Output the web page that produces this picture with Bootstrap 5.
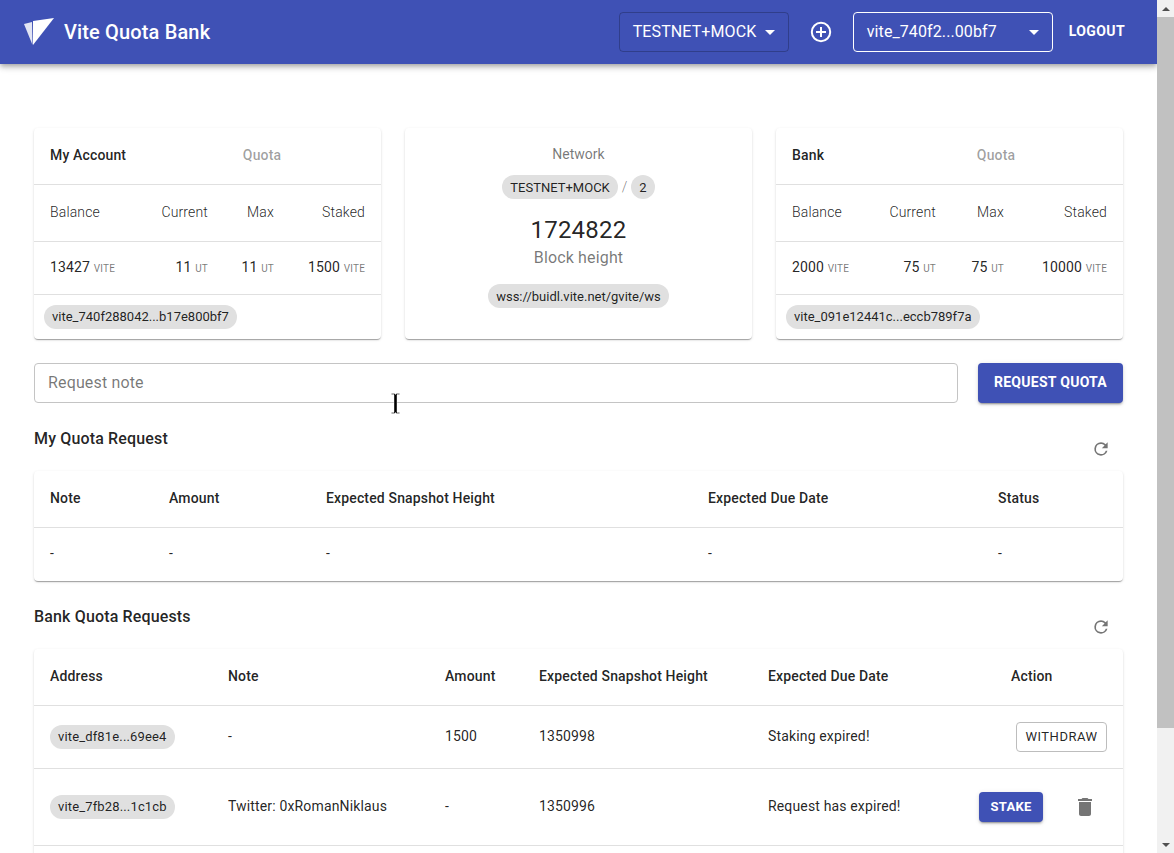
<!doctype html>
<html lang="en">
<head>
<meta charset="utf-8">
<title>Vite Quota Bank</title>
<link href="https://cdn.jsdelivr.net/npm/bootstrap@5.3.0/dist/css/bootstrap.min.css" rel="stylesheet">
<style>
html,body{height:853px;overflow:hidden;background:#fff}
body{font-family:Roboto,"Liberation Sans",sans-serif;font-size:14px;color:rgba(0,0,0,.87)}
.app-shell{height:853px;position:relative}
.app-main{width:1157px;height:853px;overflow:hidden;flex:none}
.app-bar{height:64px;background:#3f51b5;color:#fff;padding:0 32px 0 24px;box-shadow:0 2px 4px -1px rgba(0,0,0,.2),0 4px 5px 0 rgba(0,0,0,.14),0 1px 10px 0 rgba(0,0,0,.12);position:relative;z-index:2}
.app-title{font-size:20px;font-weight:500;line-height:1;margin-left:8px;letter-spacing:.0075em}
.logo-svg{width:32px;height:32px;display:block}
.select-net,.select-acct{height:40px;border-radius:4px;color:#fff;font-size:16px;display:flex;align-items:center;background:transparent;padding:0 13px;letter-spacing:.1px}
.select-net{width:170px;border:1px solid rgba(0,0,0,.23);margin-right:20px}
.select-acct{width:200px;border:1px solid #fff;margin-left:20px;margin-right:16px}
.caret-tri{width:0;height:0;border-left:5px solid transparent;border-right:5px solid transparent;border-top:5px solid #fff;margin-left:auto}
.plus-icon{width:24px;height:24px;display:block}
.logout-txt{font-size:14px;font-weight:700;letter-spacing:.02857em;color:#fff;line-height:1;margin-top:-2px}
.page-body{padding:64px 34px 0}
.cards-row{display:grid;grid-template-columns:repeat(3,347px);gap:24px;height:211px}
.paper{background:#fff;border-radius:4px;border:0;box-shadow:0 2px 1px -1px rgba(0,0,0,.2),0 1px 1px 0 rgba(0,0,0,.14),0 1px 3px 0 rgba(0,0,0,.12)}
.mui-tbl{table-layout:fixed;width:100%;margin:0;font-size:14px;letter-spacing:.01071em;--bs-table-bg:transparent;--bs-table-color:rgba(0,0,0,.87);--bs-table-border-color:#e0e0e0}
.mui-tbl th,.mui-tbl td{padding:0 16px;vertical-align:middle;border-bottom:1px solid #e0e0e0;line-height:1.43;box-shadow:none;white-space:nowrap}
.mui-tbl th{font-weight:500;padding-bottom:2px}
.mini th{height:56px}
.mini .row-labels td{height:57px;font-weight:300}
.mini .row-vals td{height:53px;font-weight:400}
.mini .quota-head{color:rgba(0,0,0,.38);text-align:center}
.mini .foot-cell{padding:0 10px;height:45px;border-bottom:0;letter-spacing:0}
.unit-txt{font-size:10px;text-transform:uppercase;color:rgba(0,0,0,.54);letter-spacing:.02em}
.chip-pill{display:inline-flex;align-items:center;height:24px;padding:0 8px;border-radius:12px;background:#e0e0e0;font-size:13px;line-height:1;color:rgba(0,0,0,.87);white-space:nowrap}
.net-card{text-align:center;padding-top:19px}
.net-label{font-size:14px;line-height:14px;color:rgba(0,0,0,.54)}
.net-chips{margin-top:14px;height:24px;color:rgba(0,0,0,.54);gap:4px;font-weight:300}
.net-chips .chip-pill{font-weight:400}
.net-round{padding:0 8px;min-width:23px;justify-content:center}
.net-height{font-size:24px;line-height:28px;margin-top:17px;color:rgba(0,0,0,.87);letter-spacing:.01em}
.net-sub{font-size:16px;line-height:20px;color:rgba(0,0,0,.54);margin-top:4px;letter-spacing:.00938em}
.net-ws{margin-top:16px}
.req-row{margin-top:24px;gap:20px;height:40px}
.note-input{width:924px;height:40px;border:1px solid #c4c4c4;border-radius:4px;padding:0 13px 2px;font-size:16px;font-family:inherit;letter-spacing:.00938em;color:rgba(0,0,0,.87);background:#fff}
.note-input::placeholder{color:rgba(0,0,0,.54);opacity:1}
.mat-btn{background:#3f51b5;color:#fff;font-weight:700;font-size:14px;letter-spacing:.02em;border:0;border-radius:4px;text-transform:uppercase;box-shadow:0 3px 1px -2px rgba(0,0,0,.2),0 2px 2px 0 rgba(0,0,0,.14),0 1px 5px 0 rgba(0,0,0,.12);line-height:1}
.btn-request{width:145px;height:40px;padding:0 0 2px}
.section-head{display:flex;justify-content:space-between;font-size:16px;font-weight:500;line-height:24px;letter-spacing:.00938em}
.section-a{margin-top:24px;height:44px}
.section-b{margin-top:24px;height:44px}
.refresh-svg{width:20px;height:20px;display:block;margin:12px 12px 0 0}
.wide thead th{height:56px}
.wide tbody td{height:54px}
.first-tbl .last-r td{border-bottom:0;padding-bottom:2px}
.tbl-b tr.r1 td{height:63px}
.tbl-b tr.r2 td{height:77px}
.tbl-b tr.r3 td{height:60px}
.action-head{padding-left:48px !important}
.btn-withdraw{width:91px;height:30px;border:1px solid #bdbdbd;border-radius:4px;background:#fff;color:rgba(0,0,0,.87);font-size:13px;font-weight:400;letter-spacing:.04em;text-transform:uppercase;line-height:1;padding:0}
.btn-stake{width:64px;height:30px;font-size:13px}
.trash-svg{width:24px;height:24px;display:block;margin-left:30px;margin-right:10px}
.scroll-col{width:17px;height:853px;background:#f1f1f1;flex:none}
.scroll-arrow{height:17px}
.arrow-up{width:0;height:0;border-left:4px solid transparent;border-right:4px solid transparent;border-bottom:4px solid #505050}
.arrow-down{width:0;height:0;border-left:4px solid transparent;border-right:4px solid transparent;border-top:4px solid #505050}
.scroll-thumb{height:711px;background:#c1c1c1}
.scroll-space{flex:1}
.ibeam{position:absolute;left:391px;top:393px;width:9px;height:21px;z-index:5}
</style>
</head>
<body>
<div class="app-shell d-flex">
  <div class="app-main">
    <header class="app-bar d-flex align-items-center">
      <svg class="logo-svg" viewBox="0 0 32 32" aria-hidden="true"><path d="M0 8 L8 6 L8.5 29 Z" fill="#fff" opacity=".85"/><path d="M9 5 L30 2 L9 29 Z" fill="#fff"/></svg>
      <span class="app-title">Vite Quota Bank</span>
      <div class="select-net ms-auto"><span>TESTNET+MOCK</span><span class="caret-tri"></span></div>
      <svg class="plus-icon" viewBox="0 0 24 24" aria-hidden="true"><circle cx="12" cy="12" r="9.2" fill="none" stroke="#fff" stroke-width="2"/><path d="M12 7v10M7 12h10" stroke="#fff" stroke-width="2" fill="none"/></svg>
      <div class="select-acct"><span>vite_740f2...00bf7</span><span class="caret-tri"></span></div>
      <span class="logout-txt">LOGOUT</span>
    </header>
    <main class="page-body">
      <div class="cards-row">
        <section class="paper">
          <table class="table mui-tbl mini">
            <colgroup><col style="width:109px"><col style="width:81px"><col style="width:66px"><col style="width:91px"></colgroup>
            <tr><th>My Account</th><th colspan="3" class="quota-head">Quota</th></tr>
            <tr class="row-labels"><td>Balance</td><td class="text-end">Current</td><td class="text-end">Max</td><td class="text-end">Staked</td></tr>
            <tr class="row-vals"><td>13427 <span class="unit-txt">vite</span></td><td class="text-end">11 <span class="unit-txt">ut</span></td><td class="text-end">11 <span class="unit-txt">ut</span></td><td class="text-end">1500 <span class="unit-txt">vite</span></td></tr>
            <tr><td colspan="4" class="foot-cell"><span class="chip-pill">vite_740f288042...b17e800bf7</span></td></tr>
          </table>
        </section>
        <section class="paper net-card">
          <div class="net-label">Network</div>
          <div class="net-chips d-flex justify-content-center align-items-center"><span class="chip-pill">TESTNET+MOCK</span><span>/</span><span class="chip-pill net-round">2</span></div>
          <div class="net-height">1724822</div>
          <div class="net-sub">Block height</div>
          <div class="net-ws"><span class="chip-pill">wss://buidl.vite.net/gvite/ws</span></div>
        </section>
        <section class="paper">
          <table class="table mui-tbl mini">
            <colgroup><col style="width:93px"><col style="width:83px"><col style="width:68px"><col style="width:103px"></colgroup>
            <tr><th>Bank</th><th colspan="3" class="quota-head">Quota</th></tr>
            <tr class="row-labels"><td>Balance</td><td class="text-end">Current</td><td class="text-end">Max</td><td class="text-end">Staked</td></tr>
            <tr class="row-vals"><td>2000 <span class="unit-txt">vite</span></td><td class="text-end">75 <span class="unit-txt">ut</span></td><td class="text-end">75 <span class="unit-txt">ut</span></td><td class="text-end">10000 <span class="unit-txt">vite</span></td></tr>
            <tr><td colspan="4" class="foot-cell"><span class="chip-pill">vite_091e12441c...eccb789f7a</span></td></tr>
          </table>
        </section>
      </div>

      <div class="req-row d-flex">
        <input class="note-input" type="text" placeholder="Request note">
        <button class="mat-btn btn-request" type="button">Request quota</button>
      </div>

      <div class="section-head section-a">
        <span>My Quota Request</span>
        <svg class="refresh-svg" viewBox="0 0 24 24" aria-hidden="true"><path fill="#757575" d="M17.65 6.35A7.96 7.96 0 0 0 12 4a8 8 0 1 0 7.73 10h-2.08A6 6 0 1 1 12 6c1.66 0 3.14.69 4.22 1.78L13 11h7V4l-2.35 2.35z"/></svg>
      </div>
      <div class="paper">
        <table class="table mui-tbl wide first-tbl">
          <colgroup><col style="width:119px"><col style="width:157px"><col style="width:382px"><col style="width:290px"><col style="width:141px"></colgroup>
          <thead><tr><th>Note</th><th>Amount</th><th>Expected Snapshot Height</th><th>Expected Due Date</th><th>Status</th></tr></thead>
          <tbody><tr class="last-r"><td>-</td><td>-</td><td>-</td><td>-</td><td>-</td></tr></tbody>
        </table>
      </div>

      <div class="section-head section-b">
        <span>Bank Quota Requests</span>
        <svg class="refresh-svg" viewBox="0 0 24 24" aria-hidden="true"><path fill="#757575" d="M17.65 6.35A7.96 7.96 0 0 0 12 4a8 8 0 1 0 7.73 10h-2.08A6 6 0 1 1 12 6c1.66 0 3.14.69 4.22 1.78L13 11h7V4l-2.35 2.35z"/></svg>
      </div>
      <div class="paper">
        <table class="table mui-tbl wide tbl-b">
          <colgroup><col style="width:178px"><col style="width:217px"><col style="width:94px"><col style="width:229px"><col style="width:211px"><col style="width:160px"></colgroup>
          <thead><tr><th>Address</th><th>Note</th><th>Amount</th><th>Expected Snapshot Height</th><th>Expected Due Date</th><th class="action-head">Action</th></tr></thead>
          <tbody>
            <tr class="r1"><td><span class="chip-pill">vite_df81e...69ee4</span></td><td>-</td><td>1500</td><td>1350998</td><td>Staking expired!</td><td class="text-end"><button class="btn-withdraw" type="button">Withdraw</button></td></tr>
            <tr class="r2"><td><span class="chip-pill">vite_7fb28...1c1cb</span></td><td>Twitter: 0xRomanNiklaus</td><td>-</td><td>1350996</td><td>Request has expired!</td><td><div class="d-flex align-items-center"><button class="mat-btn btn-stake" type="button">Stake</button><svg class="trash-svg" viewBox="0 0 24 24" aria-hidden="true"><path fill="#757575" d="M6 19c0 1.1.9 2 2 2h8c1.1 0 2-.9 2-2V7H6v12zM19 4h-3.5l-1-1h-5l-1 1H5v2h14V4z"/></svg></div></td></tr>
            <tr class="r3"><td></td><td></td><td></td><td></td><td></td><td></td></tr>
          </tbody>
        </table>
      </div>
    </main>
  </div>
  <div class="scroll-col d-flex flex-column">
    <div class="scroll-arrow d-flex align-items-center justify-content-center"><span class="arrow-up"></span></div>
    <div class="scroll-thumb"></div>
    <div class="scroll-space"></div>
    <div class="scroll-arrow d-flex align-items-center justify-content-center"><span class="arrow-down"></span></div>
  </div>
  <svg class="ibeam" viewBox="0 0 9 21" aria-hidden="true"><path d="M0.5 .5h3l1 1 1-1h3v1h-2.5v18h2.5v1h-3l-1-1-1 1h-3v-1h2.5v-18h-2.5z" fill="#000" stroke="#fff" stroke-width=".4"/></svg>
</div>
<script src="https://cdn.jsdelivr.net/npm/bootstrap@5.3.0/dist/js/bootstrap.bundle.min.js"></script>
</body>
</html>
